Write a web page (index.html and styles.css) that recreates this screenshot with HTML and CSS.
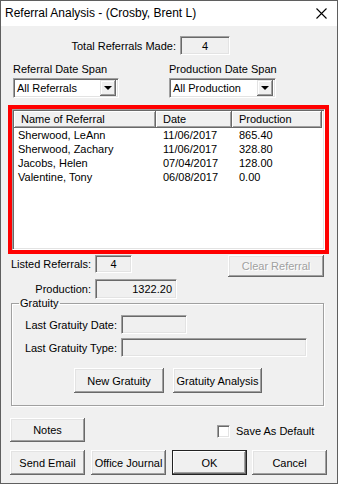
FILE: index.html
```html
<!DOCTYPE html>
<html lang="en">
<head>
    <meta charset="UTF-8">
    <title>Referral Analysis</title>
    <link rel="stylesheet" href="styles.css">
</head>
<body>
    <div class="window">
        <div class="titlebar">
            <span class="title">Referral Analysis - (Crosby, Brent L)</span>
            <svg class="close" width="11" height="11" viewBox="0 0 11 11">
                <path d="M0.5 0.5 L10.5 10.5 M10.5 0.5 L0.5 10.5" stroke="#000" stroke-width="1.1" fill="none"/>
            </svg>
        </div>

        <div class="content">
            <div class="total-row">
                <span class="label-right">Total Referrals Made:</span>
                <div class="field center">4</div>
            </div>

            <div class="span-row">
                <div class="span-col">
                    <span>Referral Date Span</span>
                    <div class="combo w106">
                        <span>All Referrals</span>
                        <div class="combo-btn"><span class="arrow"></span></div>
                    </div>
                </div>
                <div class="span-col">
                    <span>Production Date Span</span>
                    <div class="combo w107">
                        <span>All Production</span>
                        <div class="combo-btn"><span class="arrow"></span></div>
                    </div>
                </div>
            </div>

            <div class="highlight">
                <div class="listview">
                    <div class="lv-row lv-head">
                        <div class="hcell">Name of Referral</div>
                        <div class="hcell">Date</div>
                        <div class="hcell">Production</div>
                    </div>
                    <div class="lv-row">
                        <div class="cell first">Sherwood, LeAnn</div>
                        <div class="cell">11/06/2017</div>
                        <div class="cell">865.40</div>
                    </div>
                    <div class="lv-row">
                        <div class="cell first">Sherwood, Zachary</div>
                        <div class="cell">11/06/2017</div>
                        <div class="cell">328.80</div>
                    </div>
                    <div class="lv-row">
                        <div class="cell first">Jacobs, Helen</div>
                        <div class="cell">07/04/2017</div>
                        <div class="cell">128.00</div>
                    </div>
                    <div class="lv-row">
                        <div class="cell first">Valentine, Tony</div>
                        <div class="cell">06/08/2017</div>
                        <div class="cell">0.00</div>
                    </div>
                </div>
            </div>

            <div class="stat-row listed">
                <span class="stat-label">Listed Referrals:</span>
                <div class="field center w37">4</div>
                <button class="btn disabled clear-btn">Clear Referral</button>
            </div>
            <div class="stat-row production">
                <span class="stat-label">Production:</span>
                <div class="field right w82">1322.20</div>
            </div>

            <fieldset class="group">
                <legend>Gratuity</legend>
                <div class="g-row date-row">
                    <span class="g-label">Last Gratuity Date:</span>
                    <div class="field w66"></div>
                </div>
                <div class="g-row type-row">
                    <span class="g-label">Last Gratuity Type:</span>
                    <div class="field w186"></div>
                </div>
                <div class="g-buttons">
                    <button class="btn w90">New Gratuity</button>
                    <button class="btn w89">Gratuity Analysis</button>
                </div>
            </fieldset>

            <div class="notes-row">
                <button class="btn notes-btn">Notes</button>
                <label class="check">
                    <span class="checkbox"></span>
                    <span>Save As Default</span>
                </label>
            </div>

            <div class="bottom-row">
                <button class="btn w75">Send Email</button>
                <button class="btn w75">Office Journal</button>
                <button class="btn default w75">OK</button>
                <button class="btn w75">Cancel</button>
            </div>
        </div>
    </div>
</body>
</html>
```

FILE: styles.css
```css
* {
    box-sizing: border-box;
}
body {
    margin: 0;
    font-family: "Liberation Sans", Arial, sans-serif;
    font-size: 11px;
    color: #000;
}
.window {
    width: 338px;
    height: 484px;
    border: 1px solid #5f5f5f;
    background-color: #f0f0f0;
    display: flex;
    flex-direction: column;
}
.titlebar {
    height: 25px;
    background-color: #fff;
    display: flex;
    align-items: center;
    justify-content: space-between;
    padding: 0 10px 0 4px;
}
.title {
    font-size: 12px;
    margin-top: -1px;
}
.close {
    margin-top: -1px;
}
.content {
    flex: 1;
    display: flex;
    flex-direction: column;
    white-space: nowrap;
}

/* sunken read-only fields */
.field {
    height: 19px;
    background-color: #f0f0f0;
    border: 1px solid;
    border-color: #a0a0a0 #fff #fff #a0a0a0;
    box-shadow: inset 1px 1px #696969, inset -1px -1px #e3e3e3;
    display: flex;
    align-items: center;
    padding: 0 4px;
}
.field.center {
    justify-content: center;
}
.field.right {
    justify-content: flex-end;
}
.w37 { width: 37px; }
.w66 { width: 66px; }
.w82 { width: 82px; height: 20px; }
.w186 { width: 186px; }

.total-row {
    margin-top: 10px;
    display: grid;
    grid-template-columns: 175px 50px;
    column-gap: 4px;
    align-items: center;
}
.label-right {
    text-align: right;
}

.span-row {
    margin-top: 8px;
    padding-left: 12px;
    display: grid;
    grid-template-columns: 156px 107px;
}
.span-col {
    display: flex;
    flex-direction: column;
    line-height: 13px;
}
.combo {
    margin-top: 2px;
    height: 20px;
    background-color: #fff;
    border: 1px solid;
    border-color: #a0a0a0 #fff #fff #a0a0a0;
    box-shadow: inset 1px 1px #696969, inset -1px -1px #e3e3e3;
    display: flex;
    align-items: center;
    justify-content: space-between;
    padding: 0 2px 0 3px;
}
.w106 { width: 106px; }
.w107 { width: 107px; }
.combo-btn {
    width: 16px;
    height: 16px;
    background-color: #f0f0f0;
    box-shadow: inset -1px -1px #696969, inset 1px 1px #e3e3e3, inset -2px -2px #a0a0a0, inset 2px 2px #fff;
    display: flex;
    align-items: center;
    justify-content: center;
}
.arrow {
    width: 0;
    height: 0;
    border-left: 4px solid transparent;
    border-right: 4px solid transparent;
    border-top: 4px solid #000;
    margin-left: -1px;
}

.highlight {
    margin: 7px 0 0 7px;
    width: 321px;
    height: 149px;
    border: 4px solid #ff0000;
}
.listview {
    height: 100%;
    background-color: #fff;
    border: 1px solid;
    border-color: #a0a0a0 #fff #fff #a0a0a0;
    box-shadow: inset 1px 1px #696969, inset -1px -1px #e3e3e3;
    padding: 1px;
}
.lv-row {
    display: grid;
    grid-template-columns: 142px 76px 90px;
    height: 14px;
    line-height: 14px;
}
.lv-head {
    height: 17px;
    line-height: 17px;
}
.hcell {
    background-color: #f0f0f0;
    padding-left: 7px;
    box-shadow: inset -1px -1px #696969, inset 1px 1px #fff, inset -2px -2px #a0a0a0;
}
.cell {
    padding-left: 7px;
}
.cell.first {
    padding-left: 4px;
}

.stat-row {
    display: flex;
    align-items: flex-start;
}
.listed {
    margin-top: 1px;
    height: 18px;
}
.listed .field {
    height: 18px;
}
.production {
    margin-top: 6px;
}
.stat-label {
    width: 90px;
    text-align: right;
    margin-right: 4px;
    line-height: 18px;
}
.production .stat-label {
    line-height: 20px;
}

.btn {
    font-family: inherit;
    font-size: 11px;
    color: #000;
    background-color: #f0f0f0;
    border: 0;
    padding: 0;
    white-space: nowrap;
    box-shadow: inset -1px -1px #696969, inset 1px 1px #fff, inset -2px -2px #a0a0a0, inset 2px 2px #e3e3e3;
}
.btn.default {
    box-shadow: inset 0 0 0 1px #222, inset -2px -2px #696969, inset 2px 2px #fff, inset -3px -3px #a0a0a0;
}
.btn.disabled {
    color: #a0a0a0;
    text-shadow: 1px 1px #fff;
}
.clear-btn {
    margin-left: auto;
    margin-right: 13px;
    width: 96px;
    height: 22px;
}

.group {
    margin: -2px 0 0 10px;
    width: 313px;
    height: 109px;
    padding: 0 0 0 1px;
    border: 1px solid #a0a0a0;
    box-shadow: 1px 1px #fff, inset 1px 1px #fff;
}
.group legend {
    padding: 0 1px;
    margin-left: 6px;
    line-height: 12px;
}
.g-row {
    display: flex;
    align-items: center;
}
.date-row {
    margin-top: 6px;
}
.type-row {
    margin-top: 4px;
}
.g-label {
    width: 104px;
    text-align: right;
    margin-right: 4px;
}
.g-buttons {
    margin-top: 11px;
    padding-left: 61px;
    display: flex;
    gap: 9px;
}
.w90 { width: 90px; height: 25px; }
.w89 { width: 89px; height: 25px; }

.notes-row {
    margin-top: 12px;
    padding-left: 9px;
    display: flex;
    align-items: center;
}
.notes-btn {
    width: 75px;
    height: 24px;
}
.check {
    margin-left: 132px;
    margin-top: 2px;
    display: flex;
    align-items: center;
    gap: 6px;
}
.checkbox {
    width: 13px;
    height: 13px;
    background-color: #fff;
    border: 1px solid;
    border-color: #a0a0a0 #fff #fff #a0a0a0;
    box-shadow: inset 1px 1px #696969, inset -1px -1px #e3e3e3;
}

.bottom-row {
    margin-top: 8px;
    padding-left: 9px;
    display: flex;
    gap: 6px;
}
.w75 {
    width: 75px;
    height: 25px;
}
.bottom-row .default {
    margin-right: -1px;
}
```
